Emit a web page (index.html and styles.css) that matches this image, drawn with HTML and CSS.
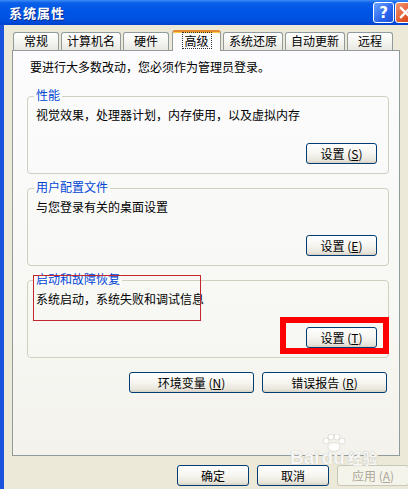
FILE: index.html
```html
<!DOCTYPE html>
<html lang="zh-CN">
<head>
  <meta charset="UTF-8">
  <meta name="viewport" content="width=device-width, initial-scale=1.0">
  <title>系统属性</title>
  <link rel="stylesheet" href="styles.css">
</head>
<body>

  <div class="window">
    <!-- Barra de título -->
    <div class="titlebar">
      <span class="title">系统属性</span>
      <div class="caption-buttons">
        <span class="cap-btn help">?</span>
        <span class="cap-btn close">
          <svg width="13" height="13" viewBox="0 0 13 13">
            <path d="M2 2 L11 11 M11 2 L2 11" stroke="#fff" stroke-width="2.4" stroke-linecap="square"/>
          </svg>
        </span>
      </div>
    </div>

    <div class="dialog">
      <!-- Abas -->
      <div class="tabs">
        <div class="tab">常规</div>
        <div class="tab">计算机名</div>
        <div class="tab">硬件</div>
        <div class="tab active"><span class="focus">高级</span></div>
        <div class="tab">系统还原</div>
        <div class="tab">自动更新</div>
        <div class="tab">远程</div>
      </div>

      <div class="panel">
        <p class="intro">要进行大多数改动，您必须作为管理员登录。</p>

        <div class="group">
          <span class="group-title">性能</span>
          <p class="group-text">视觉效果，处理器计划，内存使用，以及虚拟内存</p>
          <button class="btn">设置 (<u>S</u>)</button>
        </div>

        <div class="group">
          <span class="group-title">用户配置文件</span>
          <p class="group-text">与您登录有关的桌面设置</p>
          <button class="btn">设置 (<u>E</u>)</button>
        </div>

        <div class="group">
          <span class="group-title">启动和故障恢复</span>
          <p class="group-text">系统启动，系统失败和调试信息</p>
          <button class="btn">设置 (<u>T</u>)</button>
          <!-- marcações vermelhas -->
          <span class="mark-thin"></span>
          <span class="mark-thick"></span>
        </div>

        <div class="actions">
          <button class="btn wide">环境变量 (<u>N</u>)</button>
          <button class="btn wide">错误报告 (<u>R</u>)</button>
        </div>
      </div>

      <div class="footer">
        <button class="btn">确定</button>
        <button class="btn">取消</button>
        <button class="btn disabled">应用 (<u>A</u>)</button>
      </div>
    </div>

    <div class="watermark">
      <svg class="paw" width="26" height="18" viewBox="0 0 26 18">
        <circle cx="5" cy="7" r="3"/>
        <circle cx="10" cy="3" r="3"/>
        <circle cx="16" cy="3" r="3"/>
        <circle cx="21" cy="7" r="3"/>
        <ellipse cx="13" cy="13" rx="6" ry="4.5"/>
      </svg>
      <span>Bai</span><span class="du">du</span><span class="jy">经验</span>
    </div>
  </div>

</body>
</html>
```

FILE: styles.css
```css
* {
  margin: 0;
  padding: 0;
  box-sizing: border-box;
}

body {
  width: 408px;
  height: 489px;
  overflow: hidden;
  background-color: #ece9d8;
  font-family: "Noto Sans CJK SC", "DejaVu Sans", sans-serif;
  font-size: 12px;
  color: #000;
}

.window {
  position: relative;
  width: 420px;
  height: 489px;
}

.titlebar {
  height: 25px;
  display: flex;
  justify-content: space-between;
  align-items: center;
  padding: 0 4px 0 9px;
  background: linear-gradient(#3d8cf6 0, #0a5fe8 3px, #0056e6 40%, #0050e0 80%, #0042cf 100%);
}

.title {
  color: #fff;
  font-weight: bold;
  font-size: 13px;
  letter-spacing: 1px;
  text-shadow: 1px 1px 0 #0a2a8c;
}

.caption-buttons {
  display: flex;
  gap: 1px;
}

.cap-btn {
  width: 21px;
  height: 21px;
  display: flex;
  justify-content: center;
  align-items: center;
  border: 1px solid #fff;
  border-radius: 3px;
  color: #fff;
  font-family: "DejaVu Sans", sans-serif;
  font-weight: bold;
  font-size: 15px;
}

.help {
  background: linear-gradient(135deg, #6aa2ff, #2a66ee 60%, #1c50d4);
}

.close {
  background: linear-gradient(135deg, #f39a74, #e1552a 60%, #c9411c);
}

.dialog {
  height: 464px;
  border-left: 4px solid #1a52dc;
  padding-top: 5px;
}

.tabs {
  position: relative;
  z-index: 1;
  display: flex;
  align-items: flex-end;
  height: 21px;
  margin-left: 9px;
  margin-bottom: -1px;
}

.tab {
  height: 18px;
  min-width: 46px;
  margin-right: 2px;
  margin-bottom: 1px;
  padding: 0 5px;
  border: 1px solid #919b9c;
  border-bottom: none;
  border-radius: 3px 3px 0 0;
  background: linear-gradient(#ffffff, #f3f3ef 60%, #e8e7e1);
  line-height: 16px;
  text-align: center;
}

.tab.active {
  height: 21px;
  min-width: 49px;
  margin-bottom: 0;
  margin-left: 1px;
  border-top: 2px solid #e68b2c;
  box-shadow: inset 0 1px 0 #ffc83c;
  background-color: #fcfcfe;
  background-image: none;
  padding-top: 1px;
  line-height: 15px;
}

.focus {
  display: inline-block;
  padding: 0 2px;
  outline: 1px dotted #333;
}

.panel {
  width: 388px;
  height: 406px;
  margin-left: 8px;
  padding: 9px 10px 0 14px;
  border: 1px solid #919b9c;
  background: linear-gradient(#fcfcfe, #f7f7f3 70%, #f3f2ec);
}

.intro {
  padding-left: 3px;
  line-height: 14px;
  margin-bottom: 22px;
}

.group {
  position: relative;
  height: 78px;
  margin-bottom: 14px;
  padding: 11px 11px 9px 8px;
  display: flex;
  flex-direction: column;
  justify-content: space-between;
  border: 1px solid #d0d0bf;
  border-radius: 4px;
}

.group-title {
  position: absolute;
  top: -9px;
  left: 6px;
  padding: 0 2px;
  line-height: 14px;
  color: #0046d5;
  background-color: #fbfbf9;
}

.group-text {
  line-height: 14px;
}

.btn {
  width: 71px;
  height: 21px;
  align-self: flex-end;
  border: 1px solid #003c74;
  border-radius: 3px;
  background: linear-gradient(#ffffff, #f6f5f0 50%, #e9e6dc 85%, #d6d0c5);
  font-family: inherit;
  font-size: 12px;
  line-height: 19px;
  color: #000;
  text-align: center;
}

.btn u {
  text-underline-offset: 1px;
}

.btn.wide {
  width: 125px;
}

.btn.disabled {
  color: #aca899;
  border-color: #c9c7ba;
  background: #f5f4ea;
}

.mark-thin {
  position: absolute;
  left: 5px;
  top: -6px;
  width: 168px;
  height: 46px;
  border: 1px solid #c3272b;
}

.mark-thick {
  position: absolute;
  left: 252px;
  top: 36px;
  width: 109px;
  height: 37px;
  border: 6px solid #f00;
}

.actions {
  display: flex;
  justify-content: flex-end;
  gap: 8px;
  margin-top: 2px;
  padding-right: 2px;
}

.footer {
  display: flex;
  gap: 8px;
  margin-top: 9px;
  padding-left: 173px;
}

.footer .btn {
  width: 72px;
}

.watermark {
  position: absolute;
  left: 290px;
  top: 434px;
  display: flex;
  align-items: flex-end;
  font-family: "Liberation Sans", sans-serif;
  font-weight: bold;
  font-size: 19px;
  line-height: 19px;
  color: rgba(255, 255, 255, 0.85);
  text-shadow: 0 0 1px #c8c6bc, 0 0 1px #c8c6bc;
}

.paw {
  position: absolute;
  left: 31px;
  top: 0;
  fill: rgba(255, 255, 255, 0.85);
  stroke: #d0cec4;
  stroke-width: 0.6;
}

.du {
  margin-left: 2px;
  margin-top: 14px;
}

.jy {
  margin-left: 3px;
  font-family: "Noto Sans CJK SC", sans-serif;
  font-size: 15px;
}
```
